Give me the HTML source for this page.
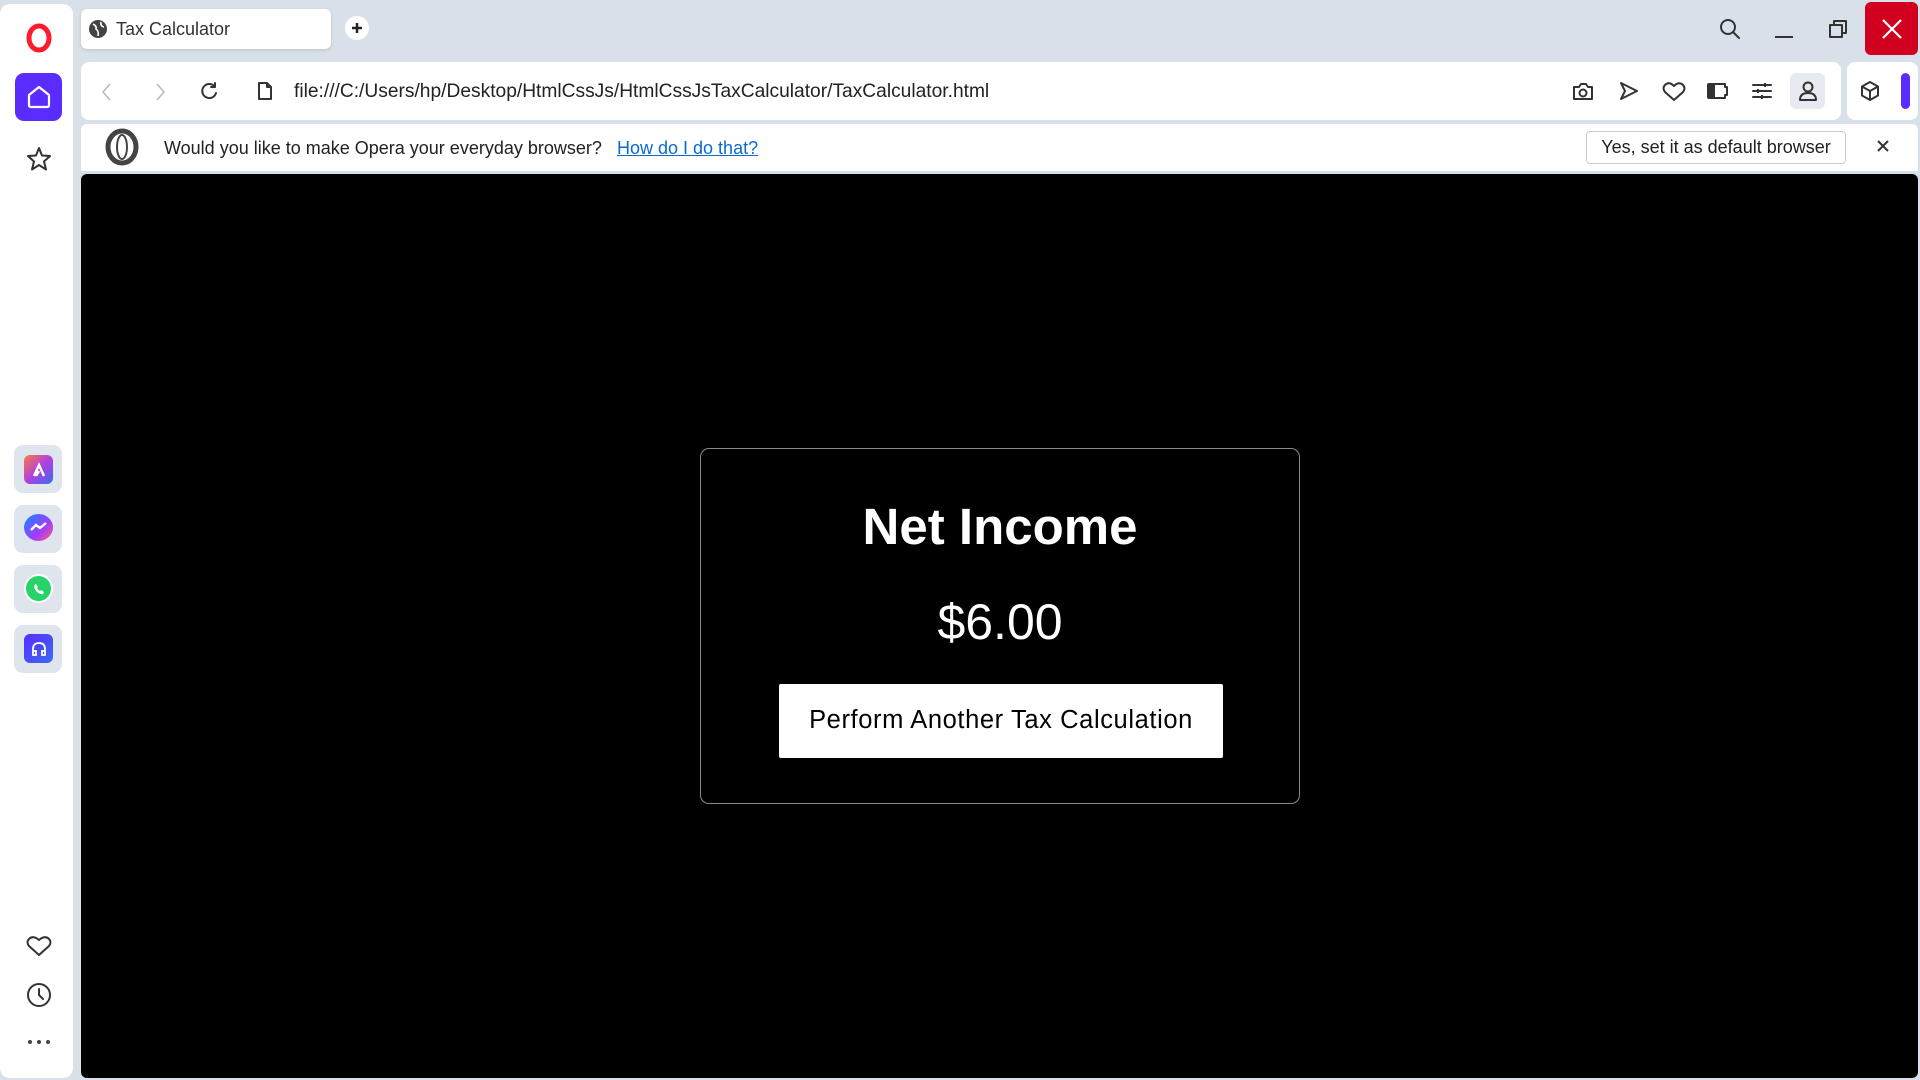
<!DOCTYPE html>
<html><head><meta charset="utf-8"><style>
*{margin:0;padding:0;box-sizing:border-box}
body{width:1920px;height:1080px;background:#d8e1ea;font-family:"Liberation Sans",sans-serif;position:relative;overflow:hidden}
.abs{position:absolute}
.side{left:0;top:4px;width:73px;height:1074px;background:#fff;border-radius:10px}
.tab{left:81px;top:9px;width:250px;height:40px;background:#fff;border-radius:6px;box-shadow:0 1px 3px rgba(0,0,0,.15);font-size:18px;color:#333;padding:10px 0 0 35px}
.addr{left:81px;top:62px;width:1760px;height:58px;background:#fff;border-radius:8px}
.ext{left:1847px;top:62px;width:71px;height:58px;background:#fff;border-radius:8px}
.info{left:81px;top:124px;width:1837px;height:47px;background:#fff;border-radius:6px 6px 0 0}
.content{left:81px;top:174px;width:1837px;height:904px;background:#000;border-radius:6px}
.card{left:700px;top:448px;width:600px;height:356px;border:1.5px solid #8a8a8a;border-radius:9px;color:#fff;text-align:center}
svg{position:absolute;overflow:visible}
.ic{fill:none;stroke:#333;stroke-width:2;stroke-linecap:round;stroke-linejoin:round}
.app{width:48px;height:48px;left:14px;background:#dfe5ec;border-radius:9px}
</style></head><body>
<div class="abs side"></div>
<svg style="left:26px;top:24px" width="26" height="28"><ellipse cx="13" cy="14" rx="10" ry="12" fill="none" stroke="#ff1b2d" stroke-width="5"/></svg>
<div class="abs" style="left:15px;top:73px;width:47px;height:48px;background:#5a2cff;border-radius:9px"></div>
<svg style="left:27px;top:85px" width="24" height="24"><path d="M2 10 L12 2 L22 10 V20 Q22 22 20 22 H4 Q2 22 2 20 Z" fill="none" stroke="#fff" stroke-width="2.2" stroke-linejoin="round"/></svg>
<svg style="left:26px;top:146px" width="26" height="26" class="ic"><path class="ic" d="M13 2 L16 9.5 L24 10 L18 15.5 L20 23.5 L13 19 L6 23.5 L8 15.5 L2 10 L10 9.5 Z"/></svg>
<div class="abs app" style="top:445px"></div>
<div class="abs" style="left:24px;top:455px;width:29px;height:29px;border-radius:6px;background:linear-gradient(135deg,#ff7a3d,#b040e0 50%,#3a6cf0)"></div>
<svg style="left:31px;top:462px" width="16" height="16"><path d="M3 14 L8 3 L13 14 M8 9 L5 14" stroke="#fff" stroke-width="2.5" fill="none"/></svg>
<div class="abs app" style="top:505px"></div>
<div class="abs" style="left:24px;top:514px;width:29px;height:27px;border-radius:50%;background:linear-gradient(135deg,#0a8cff,#a33bff 60%,#ff5d7a)"></div>
<svg style="left:29px;top:521px" width="20" height="12"><path d="M2 9 L7 4 L11 7 L17 2" stroke="#fff" stroke-width="2.4" fill="none"/></svg>
<div class="abs app" style="top:565px"></div>
<div class="abs" style="left:24px;top:574px;width:29px;height:29px;border-radius:50%;background:#25d366;border:2px solid #fff"></div>
<svg style="left:31px;top:581px" width="16" height="16"><path d="M4 3 Q2 6 5 10 Q9 14 12 13 L13 11 L10 9 L9 10 Q7 9 6 7 L7 6 L5 3 Z" fill="#fff"/></svg>
<div class="abs app" style="top:625px"></div>
<div class="abs" style="left:24px;top:634px;width:29px;height:29px;border-radius:6px;background:linear-gradient(135deg,#5a2cff,#3a6cf0)"></div>
<svg style="left:30px;top:640px" width="18" height="18"><path d="M3 13 V9 Q3 3 9 3 Q15 3 15 9 V13 M3 11 H6 V15 H3 Z M12 11 H15 V15 H12 Z" stroke="#fff" stroke-width="1.8" fill="none"/></svg>
<svg style="left:26px;top:934px" width="26" height="24"><path class="ic" d="M13 21 L3 12 Q0 8 3 5 Q7 1 13 6 Q19 1 23 5 Q26 8 23 12 Z"/></svg>
<svg style="left:26px;top:982px" width="26" height="26"><circle class="ic" cx="13" cy="13" r="11"/><path class="ic" d="M13 7 V13 L17 17"/></svg>
<svg style="left:26px;top:1039px" width="26" height="6"><circle cx="4" cy="3" r="2" fill="#444"/><circle cx="13" cy="3" r="2" fill="#444"/><circle cx="22" cy="3" r="2" fill="#444"/></svg>

<div class="abs tab">Tax Calculator</div>
<svg style="left:88px;top:19px" width="20" height="20"><circle cx="10" cy="10" r="9" fill="#444"/><path d="M5 5 Q9 7 8 10 Q11 12 10 17 M13 3 Q12 7 16 8" stroke="#fff" stroke-width="1.6" fill="none"/></svg>
<div class="abs" style="left:345px;top:16px;width:24px;height:24px;border-radius:50%;background:#fff"></div>
<svg style="left:351px;top:22px" width="12" height="12"><path d="M6 1 V11 M1 6 H11" stroke="#222" stroke-width="2.5"/></svg>

<svg style="left:1719px;top:18px" width="22" height="22"><circle class="ic" cx="9" cy="9" r="7"/><path class="ic" d="M14 14 L20 20"/></svg>
<svg style="left:1775px;top:35px" width="18" height="4"><path d="M0 2 H18" stroke="#333" stroke-width="2"/></svg>
<svg style="left:1829px;top:20px" width="18" height="18"><path d="M1 5 H13 V17 H1 Z M5 5 V1 H17 V13 H13" class="ic" stroke-linejoin="miter"/></svg>
<div class="abs" style="left:1865px;top:2px;width:53px;height:53px;background:#d2001f;border-radius:6px"></div>
<svg style="left:1882px;top:19px" width="20" height="20"><path d="M1 1 L19 19 M19 1 L1 19" stroke="#fff" stroke-width="2.2"/></svg>

<div class="abs addr"></div>
<div class="abs ext"></div>
<svg style="left:101px;top:83px" width="12" height="18"><path d="M9 1 L2 9 L9 17" stroke="#bbb" stroke-width="1.6" fill="none"/></svg>
<svg style="left:154px;top:83px" width="12" height="18"><path d="M3 1 L10 9 L3 17" stroke="#bbb" stroke-width="1.6" fill="none"/></svg>
<svg style="left:199px;top:81px" width="20" height="20"><path class="ic" d="M16 6 A7 7 0 1 0 17 12 M16 2 V6 H12"/></svg>
<svg style="left:257px;top:81px" width="16" height="20"><path class="ic" stroke-width="1.8" d="M2 2 H10 L14 6 V18 H2 Z M10 2 V6 H14"/></svg>
<div class="abs" style="left:294px;top:81px;font-size:19.2px;color:#222">file:///C:/Users/hp/Desktop/HtmlCssJs/HtmlCssJsTaxCalculator/TaxCalculator.html</div>
<svg style="left:1572px;top:81px" width="22" height="20"><path class="ic" d="M2 6 H7 L9 3 H14 L16 6 H20 V18 H2 Z"/><circle class="ic" cx="11" cy="12" r="3.5"/></svg>
<svg style="left:1619px;top:81px" width="20" height="20"><path class="ic" d="M2 2 L18 10 L2 18 L6 10 Z"/></svg>
<svg style="left:1662px;top:81px" width="24" height="21"><path class="ic" d="M12 19 L3 11 Q0 7 3 4 Q7 0 12 5 Q17 0 21 4 Q24 7 21 11 Z"/></svg>
<svg style="left:1706px;top:82px" width="24" height="18"><path d="M3 2 H9 V16 H3 Q2 16 2 15 V3 Q2 2 3 2Z" fill="#333"/><path class="ic" d="M3 2 H19 V5 H21 V13 H19 V16 H3 Q2 16 2 15 V3 Q2 2 3 2Z"/></svg>
<svg style="left:1752px;top:82px" width="20" height="18"><path class="ic" d="M1 3 H19 M1 9 H19 M1 15 H19"/><path d="M13 1 V5 M6 7 V11 M10 13 V17" stroke="#333" stroke-width="2"/></svg>
<div class="abs" style="left:1790px;top:73px;width:35px;height:36px;background:#e6ebf1;border-radius:6px"></div>
<svg style="left:1797px;top:80px" width="22" height="22"><circle class="ic" cx="11" cy="7" r="4.5"/><path class="ic" d="M3 20 Q3 13 11 13 Q19 13 19 20 Z"/></svg>
<svg style="left:1860px;top:81px" width="20" height="20"><path class="ic" d="M10 1 L18 5.5 V14.5 L10 19 L2 14.5 V5.5 Z M2 5.5 L10 10 L18 5.5 M10 10 V19"/></svg>
<div class="abs" style="left:1901px;top:73px;width:9px;height:36px;background:#5a2cff;border-radius:5px"></div>

<div class="abs info"></div>
<svg style="left:104px;top:129px" width="36" height="36"><ellipse cx="18" cy="18" rx="14" ry="16" fill="none" stroke="#444" stroke-width="5"/><ellipse cx="18" cy="18" rx="5" ry="12" fill="none" stroke="#444" stroke-width="2"/></svg>
<div class="abs" style="left:164px;top:138px;font-size:18px;color:#222">Would you like to make Opera your everyday browser?</div>
<div class="abs" style="left:617px;top:138px;font-size:18px;color:#0a6ad0;text-decoration:underline">How do I do that?</div>
<div class="abs" style="left:1586px;top:131px;width:260px;height:33px;border:1px solid #ccc;border-radius:4px;font-size:18px;color:#222;text-align:center;padding-top:5px">Yes, set it as default browser</div>
<svg style="left:1877px;top:140px" width="12" height="12"><path d="M1 1 L11 11 M11 1 L1 11" stroke="#333" stroke-width="2"/></svg>

<div class="abs content"></div>
<div class="abs card">
<div style="position:absolute;left:0;right:0;top:48px;font-size:51px;font-weight:bold">Net Income</div>
<div style="position:absolute;left:0;right:0;top:144px;font-size:50px">$6.00</div>
<div style="position:absolute;left:78px;top:235px;width:444px;height:74px;background:#fff;border-radius:2px;color:#000;font-size:25.5px;padding-top:22px;letter-spacing:.6px">Perform Another Tax Calculation</div>
</div>
</body></html>
